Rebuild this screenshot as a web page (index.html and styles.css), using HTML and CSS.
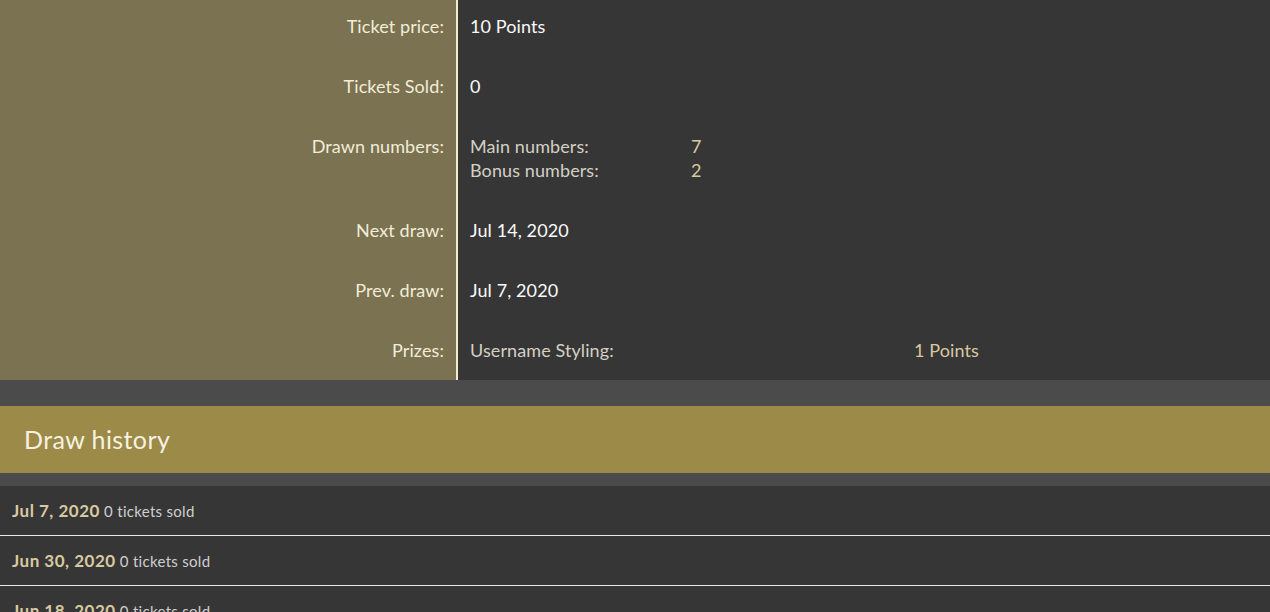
FILE: index.html
```html
<!DOCTYPE html>
<html lang="en">
<head>
  <meta charset="UTF-8" />
  <title>Lottery</title>
  <link rel="stylesheet" href="styles.css">
</head>
<body>
<table class="info">
  <tr>
    <th>Ticket price:</th>
    <td>10 Points</td>
  </tr>
  <tr>
    <th>Tickets Sold:</th>
    <td>0</td>
  </tr>
  <tr>
    <th>Drawn numbers:</th>
    <td>
      <div class="sub draws">
        <span>Main numbers:</span><span class="num">7</span>
        <span>Bonus numbers:</span><span class="num">2</span>
      </div>
    </td>
  </tr>
  <tr>
    <th>Next draw:</th>
    <td>Jul 14, 2020</td>
  </tr>
  <tr>
    <th>Prev. draw:</th>
    <td>Jul 7, 2020</td>
  </tr>
  <tr>
    <th>Prizes:</th>
    <td>
      <div class="sub prizes">
        <span>Username Styling:</span><span class="num">1 Points</span>
      </div>
    </td>
  </tr>
</table>

<div class="gap"></div>
<h2 class="block-title">Draw history</h2>
<div class="gap small"></div>

<div class="history">
  <div class="draw"><b>Jul 7, 2020</b> 0 tickets sold</div>
  <div class="draw"><b>Jun 30, 2020</b> 0 tickets sold</div>
  <div class="draw"><b>Jun 18, 2020</b> 0 tickets sold</div>
</div>
</body>
</html>
```
FILE: styles.css
```css
:root {
  --olive: #7a7250;
  --gold: #9c8a48;
  --dark: #363636;
  --strip: #4b4b4b;
  --cream: #f2ecd8;
  --num: #d8caa0;
}
body {
  margin: 0;
  background: var(--strip);
  font-family: 'Lato', 'Open Sans', sans-serif;
  color: #f5f5f5;
  overflow: hidden;
}
.info {
  width: 100%;
  border-collapse: collapse;
  margin-top: -4px;
  font-size: 18px;
  line-height: 24px;
  letter-spacing: 0.1px;
}
.info th {
  width: 444px;
  padding: 18px 12px 18px 0;
  text-align: right;
  vertical-align: top;
  font-weight: normal;
  background: var(--olive);
  color: var(--cream);
  border-right: 2px solid #f0ead0;
}
.info td {
  padding: 18px 12px;
  background: var(--dark);
  vertical-align: top;
  color: #fafafa;
}
.sub {
  display: grid;
  color: #d4d0c4;
}
.sub .num { color: var(--num); }
.draws { grid-template-columns: 221px auto; }
.prizes { grid-template-columns: 444px auto; }

.gap { height: 26px; }
.gap.small { height: 13px; }
.block-title {
  margin: 0;
  padding: 0 24px;
  height: 67px;
  line-height: 66px;
  background: var(--gold);
  color: #f7f2e0;
  font-size: 25px;
  letter-spacing: 0.4px;
  font-weight: normal;
}
.history { background: var(--dark); }
.draw {
  height: 49px;
  line-height: 50px;
  padding: 0 12px;
  border-bottom: 1px solid #e8e8e8;
  font-size: 15px;
  letter-spacing: 0.3px;
  color: #cfcfcf;
}
.draw b {
  font-size: 17px;
  letter-spacing: 0.5px;
  color: var(--num);
}
```
